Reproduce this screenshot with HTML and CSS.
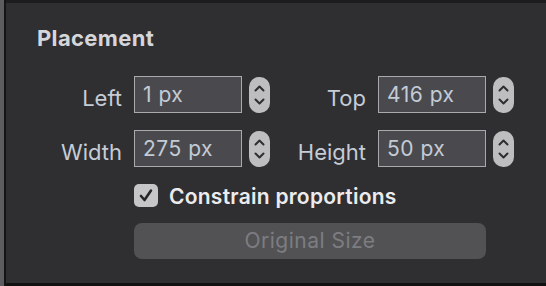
FILE: index.html
```html
<!DOCTYPE html>
<html>
<head>
<meta charset="utf-8">
<link rel="stylesheet" href="styles.css">
</head>
<body>
<div class="frame">
  <div class="side"></div>
  <div class="panel">
    <div class="title">Placement</div>
    <div class="row">
      <div class="field">
        <span class="label l1">Left</span>
        <span class="input">1 px</span>
        <span class="stepper"><svg width="21" height="36" viewBox="0 0 21 36"><path d="M6.5 13.5 L10.5 9.5 L14.5 13.5" fill="none" stroke="#2e2e30" stroke-width="2" stroke-linecap="round" stroke-linejoin="round"/><path d="M6.5 22.5 L10.5 26.5 L14.5 22.5" fill="none" stroke="#2e2e30" stroke-width="2" stroke-linecap="round" stroke-linejoin="round"/></svg></span>
      </div>
      <div class="field">
        <span class="label l2">Top</span>
        <span class="input">416 px</span>
        <span class="stepper"><svg width="21" height="36" viewBox="0 0 21 36"><path d="M6.5 13.5 L10.5 9.5 L14.5 13.5" fill="none" stroke="#2e2e30" stroke-width="2" stroke-linecap="round" stroke-linejoin="round"/><path d="M6.5 22.5 L10.5 26.5 L14.5 22.5" fill="none" stroke="#2e2e30" stroke-width="2" stroke-linecap="round" stroke-linejoin="round"/></svg></span>
      </div>
    </div>
    <div class="row">
      <div class="field">
        <span class="label l1">Width</span>
        <span class="input">275 px</span>
        <span class="stepper"><svg width="21" height="36" viewBox="0 0 21 36"><path d="M6.5 13.5 L10.5 9.5 L14.5 13.5" fill="none" stroke="#2e2e30" stroke-width="2" stroke-linecap="round" stroke-linejoin="round"/><path d="M6.5 22.5 L10.5 26.5 L14.5 22.5" fill="none" stroke="#2e2e30" stroke-width="2" stroke-linecap="round" stroke-linejoin="round"/></svg></span>
      </div>
      <div class="field">
        <span class="label l2">Height</span>
        <span class="input">50 px</span>
        <span class="stepper"><svg width="21" height="36" viewBox="0 0 21 36"><path d="M6.5 13.5 L10.5 9.5 L14.5 13.5" fill="none" stroke="#2e2e30" stroke-width="2" stroke-linecap="round" stroke-linejoin="round"/><path d="M6.5 22.5 L10.5 26.5 L14.5 22.5" fill="none" stroke="#2e2e30" stroke-width="2" stroke-linecap="round" stroke-linejoin="round"/></svg></span>
      </div>
    </div>
    <div class="check-row">
      <span class="checkbox"><svg width="24" height="23" viewBox="0 0 24 23"><path d="M7 12 L10.5 16 L17 6.5" fill="none" stroke="#262628" stroke-width="2.6" stroke-linecap="round" stroke-linejoin="round"/></svg></span>
      <span class="check-label">Constrain proportions</span>
    </div>
    <div class="button">Original Size</div>
  </div>
</div>
</body>
</html>
```
FILE: styles.css
```css
html, body {
  margin: 0;
  padding: 0;
  background: #2f2f32;
}
body {
  width: 546px;
  height: 286px;
  overflow: hidden;
  font-family: Inter, "Liberation Sans", sans-serif;
}
.frame {
  display: flex;
  height: 286px;
}
.side {
  width: 4px;
  background: #5d5d61;
  border-right: 2px solid #141415;
}
.panel {
  flex: 1;
  background: #2f2f32;
  border-top: 3px solid #1c1c1e;
  border-bottom: 3px solid #111112;
  padding: 22px 0 0 31px;
  box-sizing: border-box;
}
.title {
  font-size: 22px;
  font-weight: 700;
  letter-spacing: 0.35px;
  line-height: 26px;
  color: #d4d6da;
  margin-bottom: 25px;
}
.row {
  display: flex;
  margin-bottom: 17px;
  height: 37px;
}
.field {
  display: flex;
  align-items: center;
}
.label {
  font-size: 22px;
  line-height: 37px;
  padding-top: 4px;
  box-sizing: border-box;
  height: 37px;
  text-align: right;
  color: #c5ccd6;
  margin-right: 12px;
}
.l1 { width: 85px; }
.l2 { width: 96px; }
.input {
  width: 108px;
  height: 37px;
  box-sizing: border-box;
  border: 1px solid #aaaaad;
  background: #4a4a4e;
  color: #c3cbd6;
  font-size: 21px;
  letter-spacing: 0.5px;
  line-height: 35px;
  padding: 0 0 0 8px;
  margin-right: 7px;
}
.stepper {
  width: 21px;
  height: 36px;
  border-radius: 10px;
  background: #bebec0;
  display: block;
  margin-top: 1px;
}
.stepper svg { display: block; }
.check-row {
  display: flex;
  align-items: center;
  height: 23px;
  margin-left: 97px;
}
.checkbox {
  width: 24px;
  height: 23px;
  border-radius: 5px;
  background: #c6c6c8;
  display: block;
  margin-right: 11px;
}
.checkbox svg { display: block; }
.check-label {
  font-size: 21px;
  font-weight: 600;
  letter-spacing: 0.25px;
  color: #ececee;
  line-height: 23px;
  padding-top: 1px;
}
.button {
  margin: 16px 0 0 97px;
  width: 352px;
  height: 36px;
  border-radius: 8px;
  background: #525255;
  color: #7d7d81;
  font-size: 21px;
  letter-spacing: 0.5px;
  line-height: 36px;
  text-align: center;
}
```
